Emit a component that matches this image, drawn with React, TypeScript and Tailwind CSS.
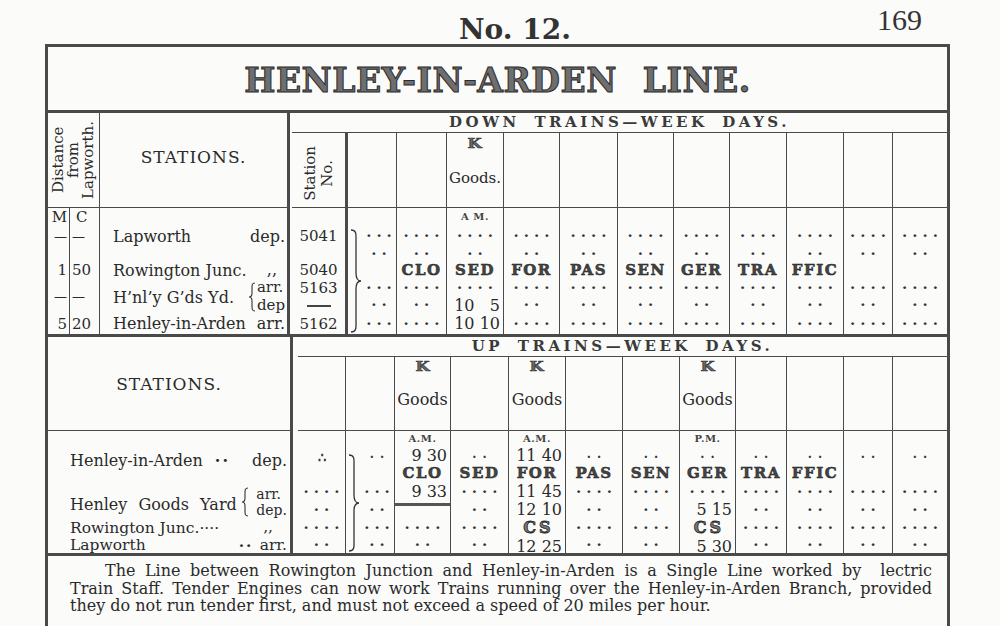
import React from "react";

type Node = React.ReactNode;

function Dots({ n }: { n: number }) {
  return (
    <span className="pl-[5px] text-[15px] font-bold leading-none tracking-[5px] text-[#333]">
      {"·".repeat(n)}
    </span>
  );
}
const d = (n: number) => <Dots n={n} />;

function DotsLow({ n }: { n: number }) {
  return (
    <span className="translate-y-[1px] pl-[6px] text-[12px] font-bold leading-[10px] tracking-[6px] text-[#333]">
      {"·".repeat(n)}
    </span>
  );
}
const dl = (n: number) => <DotsLow n={n} />;

function B({ t }: { t: string }) {
  return (
    <span className="text-[15px] font-bold leading-none tracking-[1.5px] text-[#444] [-webkit-text-stroke:0.5px_#222]">
      {t}
    </span>
  );
}
const b = (t: string) => <B t={t} />;

function Tm({ t }: { t: string }) {
  return <span className="ml-auto pr-[3px] text-[16px] leading-none text-[#2a2a2a]">{t}</span>;
}
const tm = (t: string) => <Tm t={t} />;

function TmLow({ t }: { t: string }) {
  return <span className="ml-auto translate-y-[2px] pr-[3px] text-[16px] leading-none text-[#2a2a2a]">{t}</span>;
}
const tml = (t: string) => <TmLow t={t} />;

function TmHigh({ t }: { t: string }) {
  return <span className="ml-auto -translate-y-[1px] pr-[3px] text-[16px] leading-none text-[#2a2a2a]">{t}</span>;
}
const tmh = (t: string) => <TmHigh t={t} />;

function Sm({ t }: { t: string }) {
  return <span className="text-[10px] font-bold leading-none tracking-[0.5px] text-[#444]">{t}</span>;
}
const sm = (t: string) => <Sm t={t} />;

function CS() {
  return (
    <span className="pl-[3px] text-[16px] font-bold leading-[18px] tracking-[3px] text-[#777] [-webkit-text-stroke:0.8px_#2a2a2a]">
      CS
    </span>
  );
}

function Num({ t }: { t: string }) {
  return <span className="text-[15px] leading-none text-[#2a2a2a]">{t}</span>;
}
const num = (t: string) => <Num t={t} />;

function K() {
  return (
    <span className="inline-block scale-x-125 text-[13px] font-bold leading-none text-[#666] [-webkit-text-stroke:0.6px_#333]">
      K
    </span>
  );
}

function GoodsHead({ dot, up }: { dot?: boolean; up?: boolean }) {
  return (
    <div className="flex h-full flex-col items-center">
      <div className={up ? "flex pt-[3px]" : "flex pt-[4px]"}>
        <K />
      </div>
      <div
        className={
          up
            ? "mt-[19px] text-[16px] leading-none text-[#2a2a2a]"
            : "mt-[21px] text-[15px] leading-none text-[#2a2a2a]"
        }
      >
        {dot ? "Goods." : "Goods"}
      </div>
    </div>
  );
}

function StationNoHead() {
  return (
    <div className="flex h-full items-center justify-center pt-[6px]">
      <div className="rotate-180 text-center text-[15px] leading-[17px] text-[#2a2a2a] [writing-mode:vertical-rl]">
        Station
        <br />
        No.
      </div>
    </div>
  );
}

function BraceRight({ h }: { h: number }) {
  return (
    <svg width="14" height={h} viewBox={`0 0 14 ${h}`} className="block">
      <path
        d={`M2 1 C8 1 7 6 7 12 L7 ${h / 2 - 8} C7 ${h / 2 - 3} 9 ${h / 2} 12 ${h / 2} C9 ${h / 2} 7 ${
          h / 2 + 3
        } 7 ${h / 2 + 8} L7 ${h - 12} C7 ${h - 6} 8 ${h - 1} 2 ${h - 1}`}
        fill="none"
        stroke="#333"
        strokeWidth="1.3"
      />
    </svg>
  );
}

function BraceLeft() {
  return (
    <svg width="8" height="30" viewBox="0 0 8 30" className="block">
      <path
        d="M7 1 C4 1 4 3 4 6 L4 11 C4 13 3 15 1 15 C3 15 4 17 4 19 L4 24 C4 27 4 29 7 29"
        fill="none"
        stroke="#333"
        strokeWidth="1.1"
      />
    </svg>
  );
}

type ColDef = { cls: string; head?: Node; cells: Node[]; brace?: boolean };

const DOWN_ROWS = ["h-[18px]", "h-[21px]", "h-[15px]", "h-[17px]", "h-[18px]", "h-[17px]", "h-[20px]"];
const UP_ROWS = ["h-[16px]", "h-[17px]", "h-[18px]", "h-[20px]", "h-[17px]", "h-[18px]", "h-[16px]"];

const rule = <span className="block w-[24px] border-t-2 border-[#444]" />;

const downCols: ColDef[] = [
  { cls: "w-[53px]", head: <StationNoHead />, cells: [null, num("5041"), null, num("5040"), num("5163"), rule, num("5162")] },
  { cls: "w-[51px] border-l-[3px]", brace: true, cells: [null, d(3), d(2), null, d(3), d(2), d(3)] },
  { cls: "w-[50px] border-l", cells: [null, d(4), d(2), b("CLO"), d(4), d(2), d(4)] },
  { cls: "w-[57px] border-l", head: <GoodsHead dot />, cells: [sm("A M."), d(4), d(2), b("SED"), d(4), tm("10\u2007 5"), tm("10 10")] },
  { cls: "w-[56px] border-l", cells: [null, d(4), d(2), b("FOR"), d(4), d(2), d(4)] },
  { cls: "w-[58px] border-l", cells: [null, d(4), d(2), b("PAS"), d(4), d(2), d(4)] },
  { cls: "w-[56px] border-l", cells: [null, d(4), d(2), b("SEN"), d(4), d(2), d(4)] },
  { cls: "w-[56px] border-l", cells: [null, d(4), d(2), b("GER"), d(4), d(2), d(4)] },
  { cls: "w-[57px] border-l", cells: [null, d(4), d(2), b("TRA"), d(4), d(2), d(4)] },
  { cls: "w-[57px] border-l", cells: [null, d(4), d(2), b("FFIC"), d(4), d(2), d(4)] },
  { cls: "w-[49px] border-l", cells: [null, d(4), d(2), null, d(4), d(2), d(4)] },
  { cls: "w-[55px] border-l", cells: [null, d(4), d(2), null, d(4), d(2), d(4)] },
];

const underline = <span className="mt-[1px] block h-[3px] w-full self-start bg-[#555]" />;

const upCols: ColDef[] = [
  { cls: "w-[47px]", cells: [null, <span className="translate-y-[2px] text-[13px] font-bold leading-[12px] text-[#333]">∴</span>, null, d(4), d(2), d(4), d(2)] },
  { cls: "w-[49px] border-l", brace: true, cells: [null, dl(2), null, d(3), d(2), d(3), d(2)] },
  { cls: "w-[56px] border-l", head: <GoodsHead up />, cells: [sm("A.M."), tm("9 30"), b("CLO"), tm("9 33"), underline, d(4), d(2)] },
  { cls: "w-[58px] border-l", cells: [null, dl(2), b("SED"), d(4), d(2), d(4), d(2)] },
  { cls: "w-[57px] border-l", head: <GoodsHead up />, cells: [sm("A.M."), tm("11 40"), b("FOR"), tm("11 45"), tmh("12 10"), <CS />, tml("12 25")] },
  { cls: "w-[57px] border-l", cells: [null, dl(2), b("PAS"), d(4), d(2), d(4), d(2)] },
  { cls: "w-[57px] border-l", cells: [null, dl(2), b("SEN"), d(4), d(2), d(4), d(2)] },
  { cls: "w-[56px] border-l", head: <GoodsHead up />, cells: [sm("P.M."), dl(2), b("GER"), d(4), tmh("5 15"), <CS />, tml("5 30")] },
  { cls: "w-[51px] border-l", cells: [null, dl(2), b("TRA"), d(4), d(2), d(4), d(2)] },
  { cls: "w-[57px] border-l", cells: [null, dl(2), b("FFIC"), d(4), d(2), d(4), d(2)] },
  { cls: "w-[49px] border-l", cells: [null, dl(2), null, d(4), d(2), d(4), d(2)] },
  { cls: "w-[55px] border-l", cells: [null, dl(2), null, d(4), d(2), d(4), d(2)] },
];

function Column({ col, rows, headCls, braceCls, braceH }: { col: ColDef; rows: string[]; headCls: string; braceCls: string; braceH: number }) {
  return (
    <div className={`relative flex shrink-0 flex-col border-[#4a4a4a] ${col.cls}`}>
      <div className={`${headCls} border-b border-[#4a4a4a]`}>{col.head}</div>
      {col.cells.map((c, i) => (
        <div key={i} className={`flex items-center justify-center ${rows[i]} ${col.brace ? "pl-[14px]" : ""}`}>
          {c}
        </div>
      ))}
      {col.brace && (
        <div className={braceCls}>
          <BraceRight h={braceH} />
        </div>
      )}
    </div>
  );
}

function DistCell({ m, c, h }: { m?: Node; c?: Node; h: string }) {
  return (
    <div className={`flex w-[52px] shrink-0 border-r border-[#4a4a4a] ${h}`}>
      <div className="flex w-[22px] items-center justify-end border-r border-[#4a4a4a] pr-[2px] text-[15px] leading-none">{m}</div>
      <div className="flex flex-1 items-center pl-[2px] text-[15px] leading-none">{c}</div>
    </div>
  );
}

const dash = <span className="text-[13px] leading-none">—</span>;

export default function App() {
  return (
    <div className="h-[626px] w-[1000px] overflow-hidden bg-[#fbfbfa] font-['DejaVu_Serif',serif] text-[#2a2a2a]">
      {/* page heading */}
      <div className="flex h-[44px] items-end">
        <span className="ml-[459px] text-[28px] font-bold leading-none text-[#333]">No. 12.</span>
        <span className="mb-[9px] ml-auto mr-[78px] font-['Liberation_Serif',serif] text-[30px] leading-none text-[#333]">
          169
        </span>
      </div>

      {/* frame */}
      <div className="ml-[45px] h-[582px] w-[905px] border-x-[3px] border-t-[3px] border-[#4a4a4a]">
        {/* title */}
        <div className="flex h-[66px] items-center justify-center border-b-[3px] border-[#4a4a4a] pt-[4px]">
          <span className="text-[33px] font-bold leading-none tracking-[0.5px] text-[#6e6e6e] [-webkit-text-stroke:1px_#2a2a2a] [word-spacing:14px]">
            HENLEY-IN-ARDEN LINE.
          </span>
        </div>

        {/* DOWN */}
        <div className="flex h-[224px] border-b-[3px] border-[#4a4a4a]">
          {/* left */}
          <div className="flex w-[242px] shrink-0 flex-col border-r-[3px] border-[#4a4a4a]">
            <div className="flex h-[95px] border-b border-[#4a4a4a]">
              <div className="flex w-[52px] items-center justify-center border-r border-[#4a4a4a]">
                <div className="rotate-180 text-center text-[15px] leading-[15px] [writing-mode:vertical-rl]">
                  Distance
                  <br />
                  from
                  <br />
                  Lapworth.
                </div>
              </div>
              <div className="flex flex-1 items-center justify-center pb-[4px] text-[17px] tracking-[1px]">STATIONS.</div>
            </div>
            <div className="flex">
              <DistCell h="h-[18px]" m="M" c={<span className="pl-[4px]">C</span>} />
              <div className="flex-1" />
            </div>
            <div className="flex">
              <DistCell h="h-[21px]" m={dash} c={dash} />
              <div className="flex flex-1 items-center justify-between pl-[13px] pr-[2px] text-[16px] leading-none">
                <span>Lapworth</span>
                <span>dep.</span>
              </div>
            </div>
            <div className="flex">
              <DistCell h="h-[15px]" />
              <div className="flex-1" />
            </div>
            <div className="flex">
              <DistCell h="h-[17px]" m="1" c="50" />
              <div className="flex flex-1 items-center pl-[13px] pr-[10px] text-[16px] leading-none">
                <span>Rowington Junc.</span>
                <span className="ml-auto self-start">,,</span>
              </div>
            </div>
            <div className="flex">
              <DistCell h="h-[35px]" m={dash} c={dash} />
              <div className="flex flex-1 items-center pl-[13px] text-[16px] leading-none">
                <span className="mt-[2px]">H’nl’y G’ds Yd.</span>
                <span className="ml-auto mr-[1px]">
                  <BraceLeft />
                </span>
                <div className="flex flex-col pr-[2px] text-[15px] leading-[17.5px]">
                  <span>arr.</span>
                  <span>dep</span>
                </div>
              </div>
            </div>
            <div className="flex">
              <DistCell h="h-[20px]" m="5" c="20" />
              <div className="flex flex-1 items-center justify-between pl-[13px] pr-[2px] text-[16px] leading-none">
                <span>Henley-in-Arden</span>
                <span>arr.</span>
              </div>
            </div>
          </div>
          {/* right */}
          <div className="flex flex-1 flex-col pl-[2px]">
            <div className="flex h-[20px] items-center justify-center border-b border-[#4a4a4a] text-[15px] font-bold leading-none tracking-[3.5px] text-[#3a3a3a] [word-spacing:6px]">
              DOWN TRAINS—WEEK DAYS.
            </div>
            <div className="flex">
              {downCols.map((c, i) => (
                <Column key={i} col={c} rows={DOWN_ROWS} headCls="h-[75px]" braceCls="absolute left-[1px] top-[96px]" braceH={104} />
              ))}
            </div>
          </div>
        </div>

        {/* UP */}
        <div className="flex h-[219px] border-b-[3px] border-[#4a4a4a]">
          <div className="flex w-[245px] shrink-0 flex-col border-r-[3px] border-[#4a4a4a]">
            <div className="flex h-[94px] items-center justify-center border-b border-[#4a4a4a] pt-[2px] text-[17px] tracking-[1px]">
              STATIONS.
            </div>
            <div className="flex flex-col pl-[22px] pr-[3px] text-[16px] leading-none">
              <div className="h-[21px]" />
              <div className="flex h-[18px] items-center">
                <span>Henley-in-Arden</span>
                <span className="ml-[12px] font-bold tracking-[2px]">··</span>
                <span className="ml-auto">dep.</span>
              </div>
              <div className="h-[12px]" />
              <div className="flex h-[38px] items-center">
                <span className="mt-[8px] [word-spacing:6px]">Henley Goods Yard</span>
                <span className="ml-[4px] mt-[2px]">
                  <BraceLeft />
                </span>
                <div className="ml-auto mt-[2px] flex flex-col text-[14px] leading-[16.5px]">
                  <span>arr.</span>
                  <span>dep.</span>
                </div>
              </div>
              <div className="flex h-[17px] items-center text-[15.5px]">
                <span>Rowington Junc.····</span>
                <span className="ml-auto mr-[14px] self-start">,,</span>
              </div>
              <div className="flex h-[16px] translate-y-[1px] items-center text-[15.5px]">
                <span>Lapworth</span>
                <span className="ml-[93px] font-bold tracking-[2px]">··</span>
                <span className="ml-auto">arr.</span>
              </div>
            </div>
          </div>
          <div className="flex flex-1 flex-col pl-[5px]">
            <div className="flex h-[20px] items-center justify-center border-b border-[#4a4a4a] text-[15px] font-bold leading-none tracking-[3.5px] text-[#3a3a3a] [word-spacing:6px]">
              UP TRAINS—WEEK DAYS.
            </div>
            <div className="flex">
              {upCols.map((c, i) => (
                <Column key={i} col={c} rows={UP_ROWS} headCls="h-[74px]" braceCls="absolute left-[1px] top-[97px]" braceH={98} />
              ))}
            </div>
          </div>
        </div>

        {/* footnote */}
        <div className="pl-[22px] pr-[15px] pt-[6px] text-[16px] leading-[17.5px] text-[#2a2a2a]">
          <div className="pl-[35px] text-justify [text-align-last:justify]">
            The Line between Rowington Junction and Henley-in-Arden is a Single Line worked by &nbsp;lectric
          </div>
          <div className="text-justify [text-align-last:justify]">
            Train Staff. Tender Engines can now work Trains running over the Henley-in-Arden Branch, provided
          </div>
          <div>they do not run tender first, and must not exceed a speed of 20 miles per hour.</div>
        </div>
      </div>
    </div>
  );
}
